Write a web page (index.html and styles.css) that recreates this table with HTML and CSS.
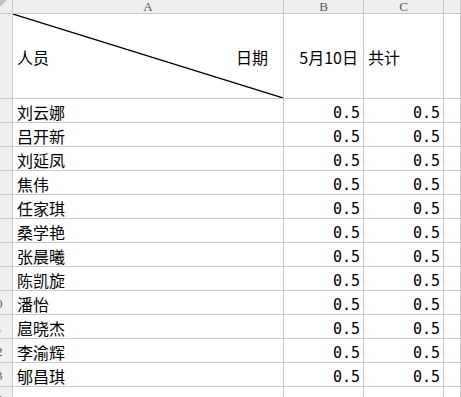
FILE: index.html
```html
<!DOCTYPE html>
<html>
<head>
<meta charset="utf-8">
<link rel="stylesheet" href="styles.css">
</head>
<body>
<div class="sheet">
  <div class="corner"><span class="tri"></span></div>
  <div class="colhead">A</div>
  <div class="colhead">B</div>
  <div class="colhead">C</div>
  <div class="colhead"></div>

  <div class="rowhead"><div class="rn">1</div></div>
  <div class="cell title">
    <svg class="diag" viewBox="0 0 270 84" preserveAspectRatio="none"><line x1="0" y1="0" x2="270" y2="84" stroke="#000" stroke-width="1.2"/></svg>
    <span>人员</span><span>日期</span>
  </div>
  <div class="cell date">5月10日</div>
  <div class="cell total">共计</div>
  <div class="cell"></div>

  <div class="rowhead"><div class="rn">2</div></div><div class="cell name">刘云娜</div><div class="cell num">0.5</div><div class="cell num">0.5</div><div class="cell"></div>
  <div class="rowhead"><div class="rn">3</div></div><div class="cell name">吕开新</div><div class="cell num">0.5</div><div class="cell num">0.5</div><div class="cell"></div>
  <div class="rowhead"><div class="rn">4</div></div><div class="cell name">刘延凤</div><div class="cell num">0.5</div><div class="cell num">0.5</div><div class="cell"></div>
  <div class="rowhead"><div class="rn">5</div></div><div class="cell name">焦伟</div><div class="cell num">0.5</div><div class="cell num">0.5</div><div class="cell"></div>
  <div class="rowhead"><div class="rn">6</div></div><div class="cell name">任家琪</div><div class="cell num">0.5</div><div class="cell num">0.5</div><div class="cell"></div>
  <div class="rowhead"><div class="rn">7</div></div><div class="cell name">桑学艳</div><div class="cell num">0.5</div><div class="cell num">0.5</div><div class="cell"></div>
  <div class="rowhead"><div class="rn">8</div></div><div class="cell name">张晨曦</div><div class="cell num">0.5</div><div class="cell num">0.5</div><div class="cell"></div>
  <div class="rowhead"><div class="rn">9</div></div><div class="cell name">陈凯旋</div><div class="cell num">0.5</div><div class="cell num">0.5</div><div class="cell"></div>
  <div class="rowhead"><div class="rn">10</div></div><div class="cell name">潘怡</div><div class="cell num">0.5</div><div class="cell num">0.5</div><div class="cell"></div>
  <div class="rowhead"><div class="rn">11</div></div><div class="cell name">扈晓杰</div><div class="cell num">0.5</div><div class="cell num">0.5</div><div class="cell"></div>
  <div class="rowhead"><div class="rn">12</div></div><div class="cell name">李渝辉</div><div class="cell num">0.5</div><div class="cell num">0.5</div><div class="cell"></div>
  <div class="rowhead"><div class="rn">13</div></div><div class="cell name">郇昌琪</div><div class="cell num">0.5</div><div class="cell num">0.5</div><div class="cell"></div>
  <div class="rowhead"><div class="rn">14</div></div><div class="cell"></div><div class="cell"></div><div class="cell"></div><div class="cell"></div>
</div>
</body>
</html>
```

FILE: styles.css
```css
html, body {
  margin: 0;
  padding: 0;
  background: #ffffff;
  overflow: hidden;
}

.sheet {
  display: grid;
  grid-template-columns: 13px 271px 80px 80px 1fr;
  grid-template-rows: 14px 85px repeat(13, 24px);
  width: 461px;
  font-family: "Noto Sans CJK SC", sans-serif;
  font-size: 16px;
  color: #000;
}

.sheet > div {
  box-sizing: border-box;
  border-right: 1px solid #c8c8c8;
  border-bottom: 1px solid #c8c8c8;
  overflow: hidden;
  white-space: nowrap;
}

.corner {
  background: #efefef;
  position: relative;
}

.tri {
  position: absolute;
  left: 0;
  top: 0;
  width: 0;
  height: 0;
  border-top: 7px solid #c4c4c4;
  border-right: 7px solid transparent;
}

.colhead {
  background: #efefef;
  font-family: "Liberation Serif", serif;
  font-size: 13px;
  line-height: 13px;
  color: #555a66;
  text-align: center;
}

.rowhead {
  background: #efefef;
  font-family: "Liberation Serif", serif;
  font-size: 13px;
  color: #555a66;
  display: flex;
  align-items: center;
  padding-top: 2px;
}

.rn {
  flex: none;
  width: 26px;
  margin-left: -17px;
  text-align: center;
}

.cell {
  background: #fff;
}

.title {
  position: relative;
  display: flex;
  justify-content: space-between;
  align-items: center;
  padding: 2px 15px 0 4px;
}

.diag {
  position: absolute;
  left: 0;
  top: 0;
  width: 270px;
  height: 84px;
}

.date {
  display: flex;
  align-items: center;
  justify-content: flex-end;
  padding: 2px 5px 0 0;
}

.total {
  display: flex;
  align-items: center;
  padding: 2px 0 0 4px;
}

.name {
  padding: 4px 0 0 4px;
  line-height: 19px;
}

.num {
  font-family: "DejaVu Sans Mono", monospace;
  font-size: 15px;
  line-height: 19px;
  padding: 5px 3px 0 0;
  text-align: right;
}
```
